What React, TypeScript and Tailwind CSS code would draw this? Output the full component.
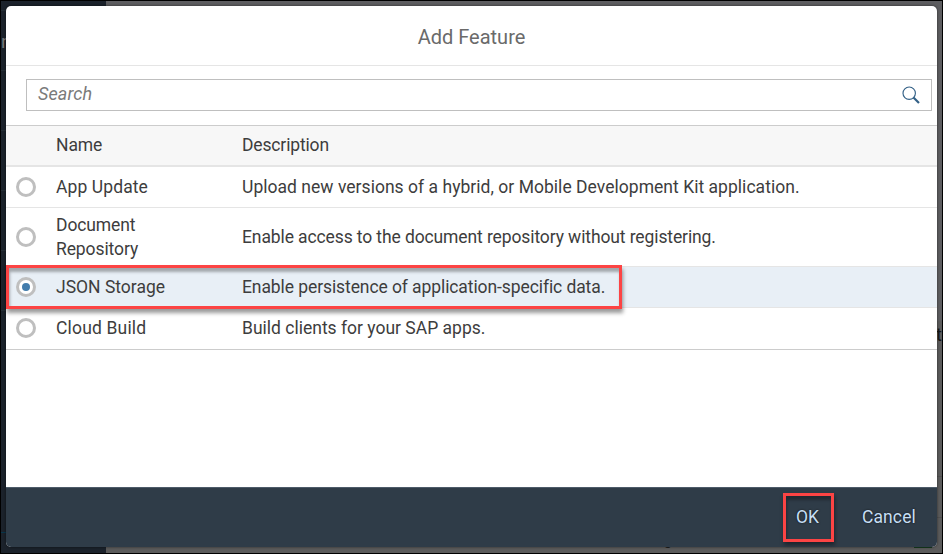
const rows = [
  { name: "App Update", nameCls: "tracking-[0.1px]", text: "Upload new versions of a hybrid, or Mobile Development Kit application.", textCls: "tracking-[0.03px]", cls: "h-[41px]", sel: false },
  { name: "Document Repository", nameCls: "tracking-[-0.1px]", text: "Enable access to the document repository without registering.", textCls: "tracking-[-0.11px]", cls: "h-[59px]", sel: false },
  { name: "JSON Storage", nameCls: "", text: "Enable persistence of application-specific data.", textCls: "tracking-[-0.09px]", cls: "h-[41px] bg-[#e8eff6]", sel: true },
  { name: "Cloud Build", nameCls: "tracking-[0.17px]", text: "Build clients for your SAP apps.", textCls: "", cls: "h-[42px] pb-px", sel: false },
];

function Radio({ selected }: { selected: boolean }) {
  return (
    <span className="ml-[10px] flex size-5 shrink-0 items-center justify-center rounded-full border-[3px] border-[#bfbfbf] bg-white">
      {selected && <span className="size-2 rounded-full bg-[#427cac]" />}
    </span>
  );
}

function Backdrop() {
  return (
    <div className="flex h-full border border-black">
      <div className="flex w-[105px] flex-col bg-[#1b222b] text-[19px] text-[#777]">
        <div className="h-[10px] border-b border-[#252e36]" />
        <div className="h-[60px] border-b border-[#252e36] pt-[17px] leading-7">n</div>
        <div className="h-[60px] border-b border-[#252e36]" />
        <div className="h-[60px] border-b border-[#252e36]" />
        <div className="h-[60px] border-b border-[#252e36]" />
        <div className="h-[60px] border-b border-[#252e36]" />
        <div className="h-[222px] border-b border-[#08364b]" />
      </div>
      <div className="flex flex-1 flex-col items-end bg-[#5b5b5b]">
        <div className="h-[320px] w-full bg-[#5d5d60]" />
        <div className="text-[18px] leading-7 text-[#171717]">nt</div>
        <div className="h-[128px] w-full border-b border-[#505050]" />
        <div className="h-[41px] w-full border-b border-[#505050]" />
        <div className="mt-[10px] mr-[10px] flex w-[268px] items-start justify-between">
          <span className="mt-[5px] text-[14px] leading-[14px] text-[#202020]">g</span>
          <span className="h-[20px] w-[18px] border border-[#173d20]" />
        </div>
      </div>
    </div>
  );
}

export default function App() {
  return (
    <div className="relative h-[554px] w-[943px] overflow-hidden font-[Roboto,sans-serif] text-[17.5px] text-[#3d3d3d]">
      <Backdrop />
      <div className="absolute top-[6px] left-[6px] flex h-[541px] w-[931px] flex-col overflow-hidden rounded-[5px] bg-white shadow-[0_0_3px_rgba(0,0,0,0.55)]">
        <h1 className="flex h-[60px] shrink-0 items-center justify-center border-b border-[#e5e5e5] pt-[3px] text-[20px] text-[#6a6a6a]">
          <span>Add Feature</span>
        </h1>
        <div className="mt-[13px] mr-[5px] mb-[14px] ml-5 flex h-8 shrink-0 items-center justify-between border border-[#bfbfbf] pr-[11px] pb-[2px] pl-[11px]">
          <span className="pb-[2px] text-[18px] tracking-[0.1px] text-[#7a7a7a] italic">Search</span>
          <svg className="mt-[2px] size-[18px]" viewBox="0 0 18 18" fill="none" stroke="#346187">
            <circle cx="7.2" cy="7.2" r="6.2" strokeWidth="1.15" />
            <path d="M11.5 11.5L17 17" strokeWidth="2.2" />
          </svg>
        </div>
        <div className="flex h-[42px] shrink-0 items-center border-t border-b-2 border-t-[#ccc] border-b-[#e5e5e5] bg-[#f7f7f7]">
          <span className="ml-[50px] w-[186px] tracking-[-0.1px]">Name</span>
          <span className="tracking-[-0.15px]">Description</span>
        </div>
        {rows.map((r, i) => (
          <div key={r.name} className={`flex shrink-0 items-center border-b ${i === 3 ? "border-[#ccc]" : "border-[#e5e5e5]"} ${r.cls}`}>
            <Radio selected={r.sel} />
            <span className={`ml-5 w-[186px] pr-[60px] leading-6 whitespace-normal ${r.nameCls}`}>{r.name}</span>
            <span className={`leading-6 whitespace-nowrap ${r.textCls}`}>{r.text}</span>
          </div>
        ))}
        <div className="flex-1" />
        <div className="flex h-[60px] shrink-0 items-center border-t border-[#4d5b69] bg-[#2f3c48] text-[#c6dff5] [text-shadow:0_0_2px_#111]">
          <span className="ml-[790px] w-[66px]">OK</span>
          <span className="tracking-[0.1px]">Cancel</span>
        </div>
      </div>
      <div className="pointer-events-none absolute top-[265px] left-[6px] h-[44px] w-[616px] border-[3px] border-[#fc4444] shadow-[1px_4px_4px_rgba(0,0,0,0.4),inset_1px_4px_3px_rgba(0,0,0,0.3)]" />
      <div className="pointer-events-none absolute top-[493px] left-[783px] h-[49px] w-[51px] border-[3px] border-[#fc4444] shadow-[1px_3px_4px_rgba(0,0,0,0.4),inset_1px_4px_3px_rgba(0,0,0,0.3)]" />
    </div>
  );
}
